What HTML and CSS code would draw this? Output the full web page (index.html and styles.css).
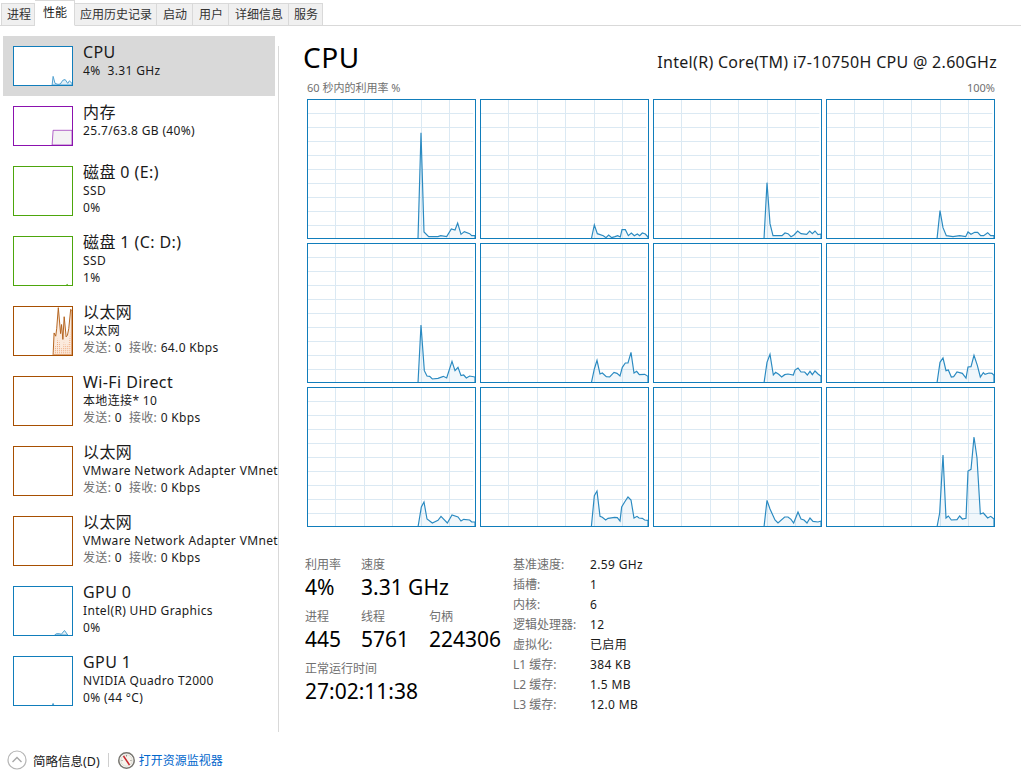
FILE: index.html
```html
<!DOCTYPE html>
<html lang="zh-CN">
<head>
    <meta charset="UTF-8">
    <meta name="viewport" content="width=device-width, initial-scale=1.0">
    <title>任务管理器</title>
    <link rel="stylesheet" href="styles.css">
</head>
<body>
    <svg class="defs" width="0" height="0">
        <defs>
            <symbol id="grid" viewBox="0 0 507 420" preserveAspectRatio="none">
                <path d="M85.5 0V420M172.5 0V420M256.5 0V420M343.5 0V420M427.5 0V420M0 43.5H499M0 85.5H499M0 127.5H499M0 169.5H499M0 211.5H499M0 253.5H499M0 295.5H499M0 337.5H499M0 379.5H499"/>
            </symbol>
            <pattern id="dots" width="6" height="6" patternUnits="userSpaceOnUse">
                <rect width="3" height="3" fill="#eda77a"/>
            </pattern>
        </defs>
    </svg>

    <nav class="tabs">
        <div class="tab">进程</div>
        <div class="tab active">性能</div>
        <div class="tab">应用历史记录</div>
        <div class="tab wide">启动</div>
        <div class="tab wide">用户</div>
        <div class="tab wide">详细信息</div>
        <div class="tab">服务</div>
    </nav>

    <div class="content">
        <aside class="sidebar">
            <div class="item short selected">
                <svg class="thumb cpu" viewBox="0 0 178 119" preserveAspectRatio="none"><polygon points="117,119 120,92 126,114 135,117 142,116 150,104 157,102 165,114 170,106 178,114 178,119"/></svg>
                <div class="item-text">
                    <div class="item-title">CPU</div>
                    <div class="item-sub">4%&nbsp; 3.31 GHz</div>
                </div>
            </div>
            <div class="item short">
                <svg class="thumb mem" viewBox="0 0 178 119" preserveAspectRatio="none"><polygon points="117,119 120,73 178,73 178,119"/></svg>
                <div class="item-text">
                    <div class="item-title">内存</div>
                    <div class="item-sub">25.7/63.8 GB (40%)</div>
                </div>
            </div>
            <div class="item">
                <svg class="thumb disk" viewBox="0 0 178 148" preserveAspectRatio="none"></svg>
                <div class="item-text">
                    <div class="item-title">磁盘 0 (E:)</div>
                    <div class="item-sub">SSD</div>
                    <div class="item-sub">0%</div>
                </div>
            </div>
            <div class="item">
                <svg class="thumb disk" viewBox="0 0 178 148" preserveAspectRatio="none"><polygon points="160,148 163,144 166,148"/></svg>
                <div class="item-text">
                    <div class="item-title">磁盘 1 (C: D:)</div>
                    <div class="item-sub">SSD</div>
                    <div class="item-sub">1%</div>
                </div>
            </div>
            <div class="item">
                <svg class="thumb net" viewBox="0 0 178 148" preserveAspectRatio="none">
                    <polygon points="120,148 123,80 128,90 131,67 136,2 143,82 146,54 150,100 154,30 160,92 164,87 168,67 174,7 178,12 178,148"/>
                    <polygon class="net-dots" points="120,148 123,125 130,118 136,90 143,125 150,130 154,100 160,125 168,110 174,70 178,80 178,148"/>
                </svg>
                <div class="item-text">
                    <div class="item-title">以太网</div>
                    <div class="item-sub">以太网</div>
                    <div class="item-sub"><span class="muted">发送:</span> 0&nbsp; <span class="muted">接收:</span> 64.0 Kbps</div>
                </div>
            </div>
            <div class="item">
                <svg class="thumb net" viewBox="0 0 178 148" preserveAspectRatio="none"></svg>
                <div class="item-text">
                    <div class="item-title">Wi-Fi Direct</div>
                    <div class="item-sub">本地连接* 10</div>
                    <div class="item-sub"><span class="muted">发送:</span> 0&nbsp; <span class="muted">接收:</span> 0 Kbps</div>
                </div>
            </div>
            <div class="item">
                <svg class="thumb net" viewBox="0 0 178 148" preserveAspectRatio="none"></svg>
                <div class="item-text">
                    <div class="item-title">以太网</div>
                    <div class="item-sub">VMware Network Adapter VMnet</div>
                    <div class="item-sub"><span class="muted">发送:</span> 0&nbsp; <span class="muted">接收:</span> 0 Kbps</div>
                </div>
            </div>
            <div class="item">
                <svg class="thumb net" viewBox="0 0 178 148" preserveAspectRatio="none"></svg>
                <div class="item-text">
                    <div class="item-title">以太网</div>
                    <div class="item-sub">VMware Network Adapter VMnet</div>
                    <div class="item-sub"><span class="muted">发送:</span> 0&nbsp; <span class="muted">接收:</span> 0 Kbps</div>
                </div>
            </div>
            <div class="item">
                <svg class="thumb cpu" viewBox="0 0 178 148" preserveAspectRatio="none"><polygon points="125,148 130,144 140,144 145,146 155,134 165,148"/></svg>
                <div class="item-text">
                    <div class="item-title">GPU 0</div>
                    <div class="item-sub">Intel(R) UHD Graphics</div>
                    <div class="item-sub">0%</div>
                </div>
            </div>
            <div class="item">
                <svg class="thumb cpu" viewBox="0 0 178 148" preserveAspectRatio="none"><polygon points="118,148 120,143 122,148"/></svg>
                <div class="item-text">
                    <div class="item-title">GPU 1</div>
                    <div class="item-sub">NVIDIA Quadro T2000</div>
                    <div class="item-sub">0% (44 °C)</div>
                </div>
            </div>
        </aside>
        <div class="divider"></div>

        <main class="main">
            <div class="head">
                <h1>CPU</h1>
                <div class="model">Intel(R) Core(TM) i7-10750H CPU @ 2.60GHz</div>
            </div>
            <div class="caption">
                <span>60 秒内的利用率 %</span>
                <span>100%</span>
            </div>
            <div class="graphs">
                <svg class="graph" viewBox="3 3 501 414" preserveAspectRatio="none"><use href="#grid" class="grid" width="507" height="420"/><polygon points="333,420 342,101 351,399 365,413 393,413 401,410 419,413 433,390 444,393 452,372 462,406 472,398 488,404 494,410 504,410 504,420"/></svg>
                <svg class="graph" viewBox="3 3 501 414" preserveAspectRatio="none"><use href="#grid" class="grid" width="507" height="420"/><polygon points="334,420 343,378 352,404 370,410 378,416 386,408 395,416 405,413 413,410 421,414 426,392 436,392 445,410 454,402 463,410 472,405 479,410 487,402 496,405 504,414 504,420"/></svg>
                <svg class="graph" viewBox="3 3 501 414" preserveAspectRatio="none"><use href="#grid" class="grid" width="507" height="420"/><polygon points="333,420 342,251 351,374 360,410 387,410 396,402 405,404 414,413 423,408 434,396 444,404 461,406 470,396 478,404 486,396 495,407 504,405 504,420"/></svg>
                <svg class="graph" viewBox="3 3 501 414" preserveAspectRatio="none"><use href="#grid" class="grid" width="507" height="420"/><polygon points="333,420 342,335 351,386 361,410 381,413 401,410 419,413 426,399 435,406 446,400 455,400 464,410 473,410 485,401 494,410 504,410 504,420"/></svg>

                <svg class="graph" viewBox="3 3 501 414" preserveAspectRatio="none"><use href="#grid" class="grid" width="507" height="420"/><polygon points="333,420 342,246 352,383 360,399 368,400 376,408 393,406 409,400 419,405 435,355 444,383 453,373 462,398 470,396 478,405 488,399 504,402 504,420"/></svg>
                <svg class="graph" viewBox="3 3 501 414" preserveAspectRatio="none"><use href="#grid" class="grid" width="507" height="420"/><polygon points="334,420 343,378 351,352 360,393 367,390 379,401 389,402 402,388 411,391 420,399 427,373 436,360 444,360 453,328 462,390 470,385 478,395 494,394 504,400 504,420"/></svg>
                <svg class="graph" viewBox="3 3 501 414" preserveAspectRatio="none"><use href="#grid" class="grid" width="507" height="420"/><polygon points="333,420 342,358 351,334 361,396 368,388 377,394 386,402 395,395 405,393 421,396 426,381 435,375 444,387 455,387 463,396 471,385 478,395 486,384 495,393 504,400 504,420"/></svg>
                <svg class="graph" viewBox="3 3 501 414" preserveAspectRatio="none"><use href="#grid" class="grid" width="507" height="420"/><polygon points="333,420 342,358 351,345 360,383 367,381 376,402 383,401 393,387 409,391 420,405 426,372 435,371 444,337 454,367 463,402 472,389 477,394 489,390 498,391 504,397 504,420"/></svg>

                <svg class="graph" viewBox="3 3 501 414" preserveAspectRatio="none"><use href="#grid" class="grid" width="507" height="420"/><polygon points="333,420 343,360 351,345 360,396 376,408 393,400 402,388 421,408 435,384 453,390 462,402 470,397 488,399 494,405 504,405 504,420"/></svg>
                <svg class="graph" viewBox="3 3 501 414" preserveAspectRatio="none"><use href="#grid" class="grid" width="507" height="420"/><polygon points="334,420 343,326 351,312 360,388 367,391 377,399 384,394 404,391 412,392 420,402 425,360 434,345 444,330 453,339 462,393 471,388 477,393 487,394 494,399 504,400 504,420"/></svg>
                <svg class="graph" viewBox="3 3 501 414" preserveAspectRatio="none"><use href="#grid" class="grid" width="507" height="420"/><polygon points="333,420 342,340 351,366 366,399 375,408 395,390 405,390 414,397 422,408 435,375 444,396 453,399 462,408 471,393 480,403 495,405 504,402 504,420"/></svg>
                <svg class="graph" viewBox="3 3 501 414" preserveAspectRatio="none"><use href="#grid" class="grid" width="507" height="420"/><polygon points="333,420 341,378 351,204 360,393 367,387 376,399 393,398 401,387 409,396 420,394 426,252 435,247 444,150 453,213 463,381 472,378 485,393 494,388 504,396 504,420"/></svg>
            </div>

            <div class="details">
                <div class="stats">
                    <div class="stat">
                        <div class="stat-label">利用率</div>
                        <div class="stat-value">4%</div>
                    </div>
                    <div class="stat span-2">
                        <div class="stat-label">速度</div>
                        <div class="stat-value">3.31 GHz</div>
                    </div>
                    <div class="stat">
                        <div class="stat-label">进程</div>
                        <div class="stat-value">445</div>
                    </div>
                    <div class="stat">
                        <div class="stat-label">线程</div>
                        <div class="stat-value">5761</div>
                    </div>
                    <div class="stat">
                        <div class="stat-label">句柄</div>
                        <div class="stat-value">224306</div>
                    </div>
                    <div class="stat span-3">
                        <div class="stat-label">正常运行时间</div>
                        <div class="stat-value">27:02:11:38</div>
                    </div>
                </div>
                <dl class="specs">
                    <dt>基准速度:</dt><dd>2.59 GHz</dd>
                    <dt>插槽:</dt><dd>1</dd>
                    <dt>内核:</dt><dd>6</dd>
                    <dt>逻辑处理器:</dt><dd>12</dd>
                    <dt>虚拟化:</dt><dd>已启用</dd>
                    <dt>L1 缓存:</dt><dd>384 KB</dd>
                    <dt>L2 缓存:</dt><dd>1.5 MB</dd>
                    <dt>L3 缓存:</dt><dd>12.0 MB</dd>
                </dl>
            </div>
        </main>
    </div>

    <footer class="footer">
        <svg class="icon-less" width="20" height="20" viewBox="0 0 20 20">
            <circle cx="10" cy="10" r="9" fill="#fff" stroke="#b4b4b4" stroke-width="1.2"/>
            <path d="M5.5 12 10 7.5 14.5 12" fill="none" stroke="#a8a8a8" stroke-width="1.4"/>
        </svg>
        <span class="less">简略信息(D)</span>
        <span class="foot-sep"></span>
        <svg class="icon-monitor" width="17" height="17" viewBox="0 0 17 17">
            <circle cx="8.5" cy="8.5" r="7.7" fill="#fff" stroke="#77756f" stroke-width="1.5"/>
            <circle cx="8.5" cy="8.5" r="5.8" fill="#f6f3ec" stroke="#c9c4b8" stroke-width=".6"/>
            <path d="M5.5 4 11.5 13" stroke="#c9252c" stroke-width="1.5"/>
            <path d="M8.5 3V4.5M13.5 8.5H12.4M3.5 8.5H4.6" stroke="#77756f" stroke-width=".8"/>
        </svg>
        <a class="monitor-link" href="#">打开资源监视器</a>
    </footer>
</body>
</html>
```

FILE: styles.css
```css
* {
    margin: 0;
    padding: 0;
    box-sizing: border-box;
}

body {
    width: 1021px;
    height: 782px;
    display: flex;
    flex-direction: column;
    overflow: hidden;
    background: #fff;
    color: #1a1a1a;
    font-family: "Noto Sans", "Noto Sans CJK SC", sans-serif;
    font-size: 12px;
}

.defs {
    display: block;
    height: 0;
}

/* Tabs */
.tabs {
    display: flex;
    align-items: flex-end;
    height: 26px;
    padding-left: 1px;
    border-bottom: 1px solid #d9d9d9;
}

.tab {
    height: 23px;
    margin-bottom: -1px;
    padding: 0 4px 0 5px;
    line-height: 22px;
    background: #f0f0f0;
    border-top: 1px solid #d9d9d9;
    border-right: 1px solid #d9d9d9;
    border-bottom: 1px solid #d9d9d9;
    color: #333;
    white-space: nowrap;
}

.tab:first-child {
    border-left: 1px solid #d9d9d9;
    padding: 0 3px 0 5px;
}

.tab.wide {
    padding: 0 5px 0 6px;
}

.tab.active {
    height: 26px;
    padding: 0 7px 0 8px;
    line-height: 23px;
    background: #fff;
    border-bottom-color: #fff;
    color: #1a1a1a;
}

/* Layout */
.content {
    display: flex;
    flex: 1;
    min-height: 0;
}

.sidebar {
    width: 278px;
    padding: 10px 0 0 3px;
    overflow: hidden;
}

.divider {
    width: 1px;
    margin-top: 20px;
    background: #d9d9d9;
}

/* Sidebar items */
.item {
    display: flex;
    gap: 10px;
    width: 272px;
    height: 70px;
    padding: 10px 0 0 10px;
    white-space: nowrap;
}

.item.short {
    height: 60px;
}

.item.selected {
    background: #d9d9d9;
}

.thumb {
    flex: none;
    width: 60px;
    height: 50px;
    border: 1px solid;
    background: #fff;
}

.short .thumb {
    height: 40px;
}

.thumb.cpu {
    border-color: #117dbb;
}

.thumb.cpu polygon {
    fill: #e3f0f7;
    stroke: #4d9fcf;
    stroke-width: 3;
}

.thumb.mem {
    border-color: #8b12ae;
}

.thumb.mem polygon {
    fill: #f4f2f4;
    stroke: #8b12ae;
    stroke-width: 2;
}

.thumb.disk {
    border-color: #4da60c;
}

.thumb.disk polygon {
    fill: #4da60c;
}

.thumb.net {
    border-color: #a74f01;
}

.thumb.net polygon {
    fill: #fbeadd;
    stroke: #b3621c;
    stroke-width: 3;
}

.thumb.net polygon.net-dots {
    fill: url(#dots);
    stroke: none;
}

.item-text {
    margin-top: -4px;
}

.item-title {
    font-size: 16px;
    line-height: 20px;
    letter-spacing: 0.4px;
}

.item-sub {
    font-size: 12px;
    line-height: 17px;
    letter-spacing: 0.35px;
}

.muted {
    color: #707070;
}

/* Main panel */
.main {
    flex: 1;
    padding: 0 24px 0 24px;
}

.head {
    display: flex;
    justify-content: space-between;
    align-items: baseline;
    height: 42px;
    margin-top: 10px;
}

h1 {
    font-size: 28px;
    font-weight: 400;
    line-height: 42px;
    letter-spacing: 0.5px;
    color: #000;
}

.model {
    font-size: 16px;
    letter-spacing: 0.3px;
}

.caption {
    display: flex;
    justify-content: space-between;
    margin: 2px 2px 3px 4px;
    font-size: 11px;
    line-height: 16px;
    color: #707070;
}

.graphs {
    display: grid;
    grid-template-columns: repeat(4, 169px);
    grid-auto-rows: 140px;
    gap: 4px;
    margin-left: 4px;
}

.graph {
    display: block;
    width: 169px;
    height: 140px;
    border: 1px solid #117dbb;
}

.grid {
    fill: none;
    stroke: #dbe9f3;
    stroke-width: 3;
}

.graph polygon {
    fill: rgba(17, 125, 187, 0.06);
    stroke: #2a8ac1;
    stroke-width: 3.5;
}

/* Stats under the graphs */
.details {
    display: flex;
    margin: 28px 0 0 2px;
}

.stats {
    display: grid;
    grid-template-columns: 56px 68px 84px;
    grid-auto-rows: 52px;
    align-content: start;
    padding-top: 2px;
}

.span-2 {
    grid-column: span 2;
}

.span-3 {
    grid-column: span 3;
}

.stat-label {
    line-height: 16px;
    color: #707070;
}

.stat-value {
    font-size: 21px;
    line-height: 28px;
    color: #000;
    white-space: nowrap;
}

.specs {
    display: grid;
    grid-template-columns: 77px auto;
    grid-auto-rows: 20px;
    line-height: 20px;
}

.specs dt {
    color: #707070;
}

.specs dd {
    color: #1a1a1a;
    letter-spacing: 0.35px;
}

/* Footer */
.footer {
    display: flex;
    align-items: center;
    height: 50px;
    padding: 6px 0 0 7px;
}

.less {
    margin-left: 6px;
    font-size: 12.5px;
    color: #1a1a1a;
}

.foot-sep {
    width: 1px;
    height: 14px;
    margin: 0 9px 0 8px;
    background: #cfcfcf;
}

.monitor-link {
    margin-left: 4px;
    font-size: 12px;
    color: #0066cc;
    text-decoration: none;
}
```
